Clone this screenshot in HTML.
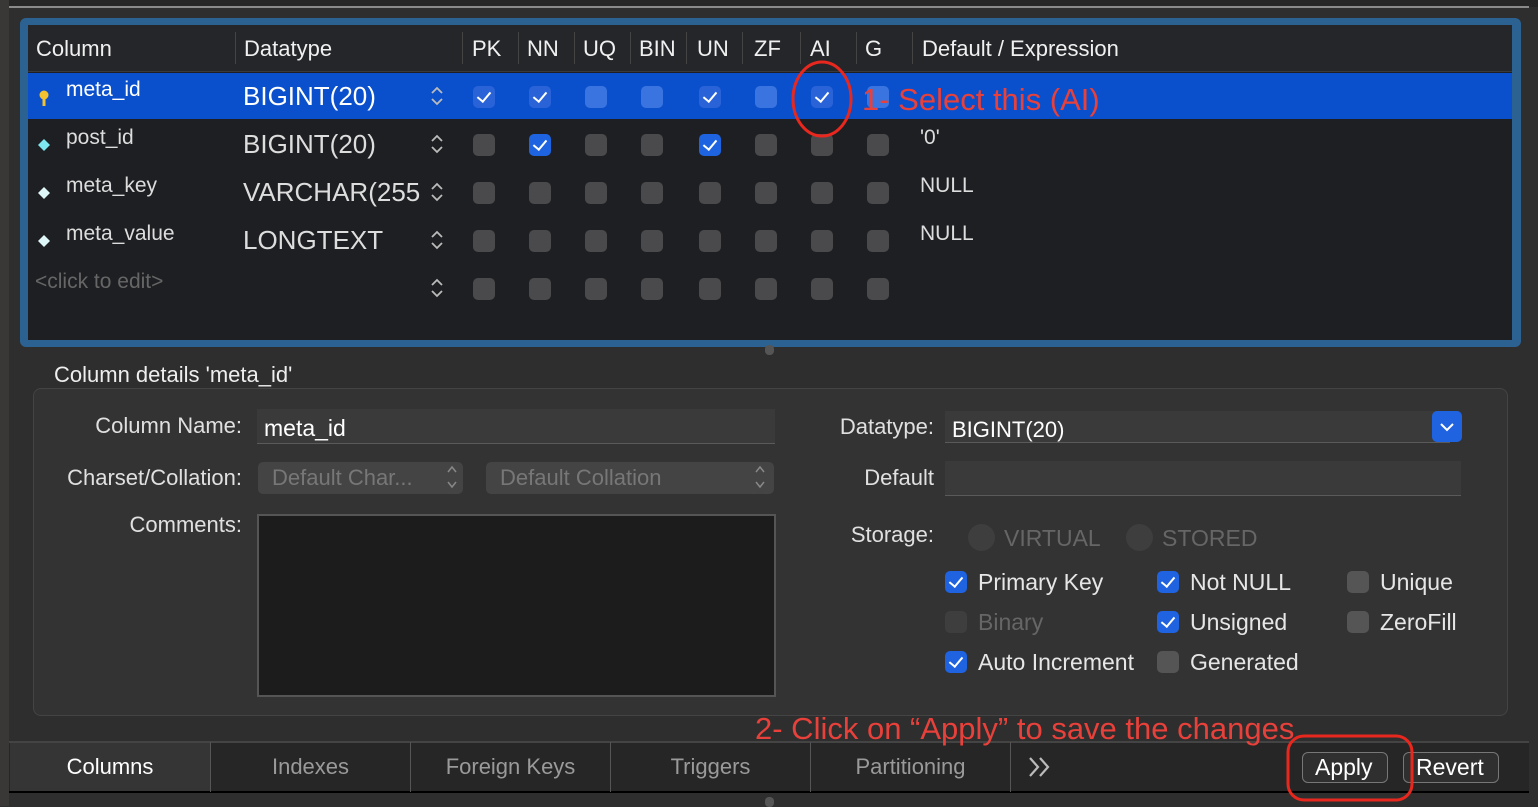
<!DOCTYPE html>
<html><head><meta charset="utf-8"><style>
*{margin:0;padding:0;box-sizing:border-box}
body{width:1538px;height:806px;background:#2e2e2e;font-family:"Liberation Sans",sans-serif;position:relative;overflow:hidden;color:#e6e6e6}
.a{position:absolute}
.t{position:absolute;white-space:nowrap}
.cb{position:absolute;width:22px;height:22px;border-radius:5px;background:#4a4a4c}
.cb.on{background:#1e64e0}
.cb.on::after{content:"";position:absolute;left:7px;top:3px;width:6px;height:11px;border:solid #fff;border-width:0 2.5px 2.5px 0;transform:rotate(40deg)}
.sel .cb{background:#3a74e0}
.sel .cb.on{background:#2a63d8}
.hd{font-size:22px;color:#f0f0f0}
.sep{position:absolute;top:32px;width:1px;height:32px;background:#444}
.lbl{position:absolute;font-size:22px;color:#e0e0e0;text-align:right;white-space:nowrap}
.fld{position:absolute;background:#3a3a3a;border-bottom:1px solid #5a5a5a}
.ck{position:absolute;width:22px;height:22px;border-radius:5px;background:#555}
.ck.on{background:#1f63e0}
.ck.on::after{content:"";position:absolute;left:7px;top:3px;width:6px;height:11px;border:solid #fff;border-width:0 2.5px 2.5px 0;transform:rotate(40deg)}
.cl{position:absolute;white-space:nowrap;font-size:23px}
.tab{position:absolute;top:742px;height:50px;width:200px;border-left:1px solid #555;font-size:22px;color:#9a9a9a;text-align:center;line-height:50px}
.nm{position:absolute;white-space:nowrap;font-size:21px;color:#ddd}
.dt{position:absolute;white-space:nowrap;font-size:26px;color:#ddd}
</style></head><body>
<div class="a" style="left:0;top:0;width:9px;height:806px;background:#3a3836"></div>
<div class="a" style="left:9px;top:0;width:1529px;height:7px;background:#262626"></div>
<div class="a" style="left:9px;top:6px;width:1520px;height:2px;background:#8a8a8a"></div>
<div class="a" style="left:20px;top:18px;width:1501px;height:329px;background:#2c6291;border-radius:6px"></div>
<div class="a" style="left:28px;top:25px;width:1484px;height:315px;background:#1e1f22"></div>
<div class="a" style="left:28px;top:25px;width:1484px;height:47px;background:#25262a;border-bottom:1px solid #3a3a3a"></div>
<div class="t hd" style="left:36px;top:36px">Column</div>
<div class="t hd" style="left:244px;top:36px">Datatype</div>
<div class="t hd" style="left:472px;top:36px">PK</div>
<div class="t hd" style="left:527px;top:36px">NN</div>
<div class="t hd" style="left:583px;top:36px">UQ</div>
<div class="t hd" style="left:639px;top:36px">BIN</div>
<div class="t hd" style="left:697px;top:36px">UN</div>
<div class="t hd" style="left:754px;top:36px">ZF</div>
<div class="t hd" style="left:810px;top:36px">AI</div>
<div class="t hd" style="left:865px;top:36px">G</div>
<div class="t hd" style="left:922px;top:36px">Default / Expression</div>
<div class="sep" style="left:235px"></div><div class="sep" style="left:462px"></div><div class="sep" style="left:518px"></div><div class="sep" style="left:574px"></div><div class="sep" style="left:630px"></div><div class="sep" style="left:686px"></div><div class="sep" style="left:742px"></div><div class="sep" style="left:800px"></div><div class="sep" style="left:856px"></div><div class="sep" style="left:912px"></div>
<div class="a" style="left:28px;top:73px;width:1484px;height:46px;background:#0a50cc"></div>

<div class="nm" style="left:66px;top:78px;color:#fff">meta_id</div>
<div class="nm" style="left:66px;top:126px">post_id</div>
<div class="nm" style="left:66px;top:174px">meta_key</div>
<div class="nm" style="left:66px;top:222px">meta_value</div>
<div class="nm" style="left:35px;top:270px;color:#666">&lt;click to edit&gt;</div>
<div class="dt" style="left:243px;top:81px;color:#fff">BIGINT(20)</div>
<div class="dt" style="left:243px;top:129px">BIGINT(20)</div>
<div class="dt" style="left:243px;top:177px">VARCHAR(255</div>
<div class="dt" style="left:243px;top:225px">LONGTEXT</div>
<div class="nm" style="left:920px;top:126px">'0'</div>
<div class="nm" style="left:920px;top:174px">NULL</div>
<div class="nm" style="left:920px;top:222px">NULL</div>

<div class="sel">
<div class="cb on" style="left:473px;top:86px"></div><div class="cb on" style="left:529px;top:86px"></div><div class="cb" style="left:585px;top:86px"></div><div class="cb" style="left:641px;top:86px"></div><div class="cb on" style="left:699px;top:86px"></div><div class="cb" style="left:755px;top:86px"></div><div class="cb on" style="left:811px;top:86px"></div><div class="cb" style="left:867px;top:86px"></div>
</div>
<div class="cb" style="left:473px;top:134px"></div><div class="cb on" style="left:529px;top:134px"></div><div class="cb" style="left:585px;top:134px"></div><div class="cb" style="left:641px;top:134px"></div><div class="cb on" style="left:699px;top:134px"></div><div class="cb" style="left:755px;top:134px"></div><div class="cb" style="left:811px;top:134px"></div><div class="cb" style="left:867px;top:134px"></div>
<div class="cb" style="left:473px;top:182px"></div><div class="cb" style="left:529px;top:182px"></div><div class="cb" style="left:585px;top:182px"></div><div class="cb" style="left:641px;top:182px"></div><div class="cb" style="left:699px;top:182px"></div><div class="cb" style="left:755px;top:182px"></div><div class="cb" style="left:811px;top:182px"></div><div class="cb" style="left:867px;top:182px"></div>
<div class="cb" style="left:473px;top:230px"></div><div class="cb" style="left:529px;top:230px"></div><div class="cb" style="left:585px;top:230px"></div><div class="cb" style="left:641px;top:230px"></div><div class="cb" style="left:699px;top:230px"></div><div class="cb" style="left:755px;top:230px"></div><div class="cb" style="left:811px;top:230px"></div><div class="cb" style="left:867px;top:230px"></div>
<div class="cb" style="left:473px;top:278px"></div><div class="cb" style="left:529px;top:278px"></div><div class="cb" style="left:585px;top:278px"></div><div class="cb" style="left:641px;top:278px"></div><div class="cb" style="left:699px;top:278px"></div><div class="cb" style="left:755px;top:278px"></div><div class="cb" style="left:811px;top:278px"></div><div class="cb" style="left:867px;top:278px"></div>
<div class="t" style="left:862px;top:82px;font-size:31px;color:#e8403a">1- Select this (AI)</div>
<div class="a" style="left:765px;top:345px;width:9px;height:10px;border-radius:4px;background:#555"></div>

<div class="t" style="left:54px;top:362px;font-size:22px;color:#eee">Column details 'meta_id'</div>
<div class="a" style="left:33px;top:388px;width:1475px;height:328px;background:#333;border:1px solid #444;border-radius:8px"></div>
<div class="lbl" style="right:1296px;top:413px">Column Name:</div>
<div class="fld" style="left:257px;top:409px;width:518px;height:35px"></div>
<div class="t" style="left:264px;top:415px;font-size:23px;color:#fff">meta_id</div>
<div class="lbl" style="right:1296px;top:465px">Charset/Collation:</div>
<div class="a" style="left:258px;top:462px;width:205px;height:32px;background:#444;border-radius:5px"></div>
<div class="t" style="left:272px;top:465px;font-size:22px;color:#777">Default Char...</div>
<div class="a" style="left:486px;top:462px;width:288px;height:32px;background:#444;border-radius:5px"></div>
<div class="t" style="left:500px;top:465px;font-size:22px;color:#777">Default Collation</div>
<div class="lbl" style="right:1296px;top:512px">Comments:</div>
<div class="a" style="left:257px;top:514px;width:519px;height:183px;background:#1c1c1c;border:2px solid #555"></div>

<div class="lbl" style="right:604px;top:414px">Datatype:</div>
<div class="fld" style="left:945px;top:411px;width:505px;height:32px"></div>
<div class="t" style="left:952px;top:417px;font-size:22px;color:#fff">BIGINT(20)</div>
<div class="a" style="left:1432px;top:411px;width:30px;height:31px;background:#1f63e0;border-radius:5px"></div>
<div class="lbl" style="right:604px;top:465px">Default</div>
<div class="fld" style="left:945px;top:461px;width:516px;height:35px"></div>
<div class="lbl" style="right:604px;top:522px">Storage:</div>
<div class="a" style="left:968px;top:524px;width:27px;height:27px;border-radius:50%;background:#3e3e3e"></div>
<div class="t" style="left:1004px;top:525px;font-size:23px;color:#666">VIRTUAL</div>
<div class="a" style="left:1126px;top:524px;width:27px;height:27px;border-radius:50%;background:#3e3e3e"></div>
<div class="t" style="left:1162px;top:525px;font-size:23px;color:#666">STORED</div>

<div class="ck on" style="left:945px;top:571px"></div><div class="cl" style="left:978px;top:569px">Primary Key</div>
<div class="ck on" style="left:1157px;top:571px"></div><div class="cl" style="left:1190px;top:569px">Not NULL</div>
<div class="ck" style="left:1347px;top:571px"></div><div class="cl" style="left:1380px;top:569px">Unique</div>
<div class="ck" style="left:945px;top:611px;background:#3e3e3e"></div><div class="cl" style="left:978px;top:609px;color:#666">Binary</div>
<div class="ck on" style="left:1157px;top:611px"></div><div class="cl" style="left:1190px;top:609px">Unsigned</div>
<div class="ck" style="left:1347px;top:611px"></div><div class="cl" style="left:1380px;top:609px">ZeroFill</div>
<div class="ck on" style="left:945px;top:651px"></div><div class="cl" style="left:978px;top:649px">Auto Increment</div>
<div class="ck" style="left:1157px;top:651px"></div><div class="cl" style="left:1190px;top:649px">Generated</div>

<div class="a" style="left:9px;top:741px;width:1520px;height:52px;background:#262626;border-top:2px solid #444;border-bottom:2px solid #000"></div>
<div class="a" style="left:10px;top:743px;width:200px;height:48px;background:#353535"></div>
<div class="tab" style="left:10px;color:#fff;border-left:none">Columns</div>
<div class="tab" style="left:210px">Indexes</div>
<div class="tab" style="left:410px">Foreign Keys</div>
<div class="tab" style="left:610px">Triggers</div>
<div class="tab" style="left:810px">Partitioning</div>
<div class="tab" style="left:1010px;width:1px"></div>
<div class="a" style="left:1302px;top:752px;width:86px;height:31px;border:1px solid #777;border-radius:6px;background:#2f2f2f"></div>
<div class="t" style="left:1315px;top:754px;font-size:23px;color:#fff">Apply</div>
<div class="a" style="left:1403px;top:752px;width:96px;height:31px;border:1px solid #777;border-radius:6px;background:#2f2f2f"></div>
<div class="t" style="left:1416px;top:754px;font-size:23px;color:#fff">Revert</div>
<div class="a" style="left:765px;top:797px;width:9px;height:10px;border-radius:4px;background:#555"></div>
<div class="t" style="left:755px;top:711px;font-size:31px;color:#e8403a">2- Click on “Apply” to save the changes</div>

<svg class="a" style="left:0;top:0;z-index:5" width="1538" height="806">
<defs><g id="ud"><path d="M-5 -3 L0 -8 L5 -3 M-5 3 L0 8 L5 3" fill="none" stroke="#bbb" stroke-width="1.8"/></g></defs>
<use href="#ud" x="437" y="96"/>
<use href="#ud" x="437" y="144"/><use href="#ud" x="437" y="192"/><use href="#ud" x="437" y="240"/><use href="#ud" x="437" y="288"/>
<g fill="#f2c230"><circle cx="44" cy="95" r="4.5"/><rect x="42.5" y="97" width="3" height="9"/></g>
<g fill="#7de6ee"><path d="M44 139 L50 145 L44 151 L38 145Z"/></g>
<g fill="#dff6f8"><path d="M44 187 L50 193 L44 199 L38 193Z"/><path d="M44 235 L50 241 L44 247 L38 241Z"/></g>
<ellipse cx="822" cy="99" rx="29" ry="37" fill="none" stroke="#e8281e" stroke-width="3"/>
<rect x="1288" y="736" width="124" height="64" rx="16" fill="none" stroke="#e8281e" stroke-width="3"/>
<path d="M1030 758 L1038 767 L1030 776 M1040 758 L1048 767 L1040 776" fill="none" stroke="#bbb" stroke-width="2.2"/>
<path d="M1441 424 L1447 430 L1453 424" fill="none" stroke="#fff" stroke-width="2"/>
<path d="M448 472 L452 467 L456 472 M448 482 L452 487 L456 482" fill="none" stroke="#888" stroke-width="1.5"/>
<path d="M756 472 L760 467 L764 472 M756 482 L760 487 L764 482" fill="none" stroke="#888" stroke-width="1.5"/>
</svg>
</body></html>
